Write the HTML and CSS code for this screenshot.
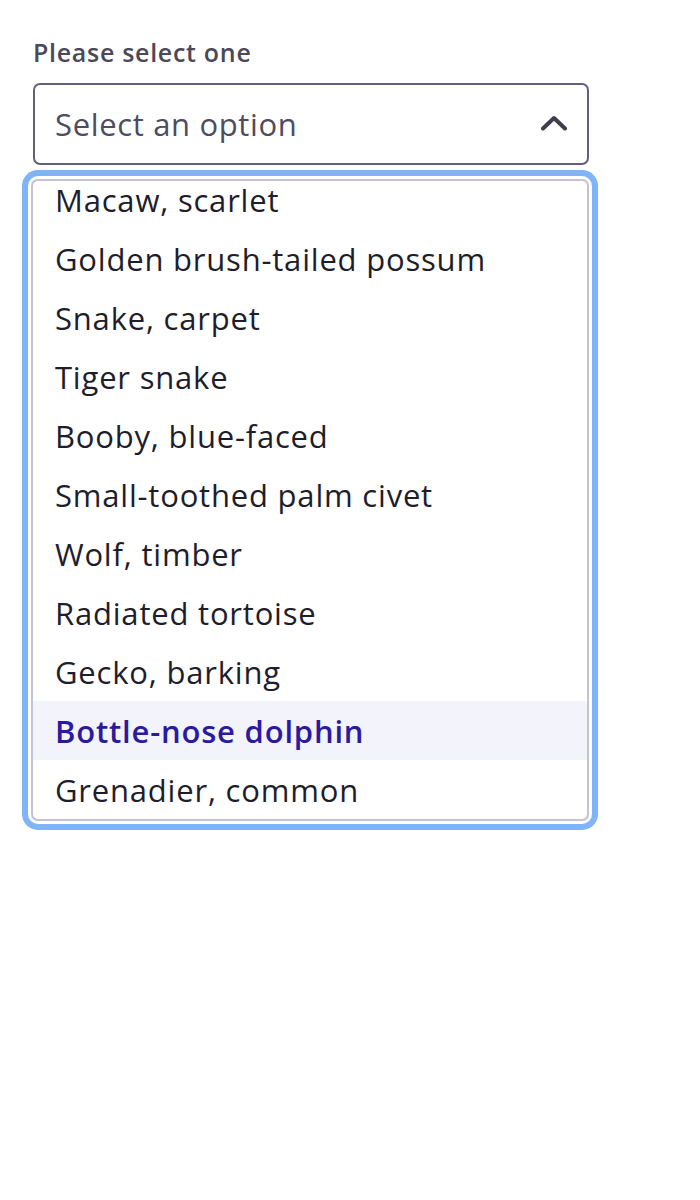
FILE: index.html
```html
<!DOCTYPE html>
<html>
<head>
<meta charset="utf-8">
<link rel="stylesheet" href="styles.css">
</head>
<body>
<div class="field">
  <label class="label">Please select one</label>
  <div class="select">
    <span class="placeholder">Select an option</span>
    <svg class="chevron" width="26" height="16" viewBox="0 0 26 16"><polyline points="2,13.5 13,3 24,13.5" fill="none" stroke="#3f3d50" stroke-width="4" stroke-linecap="round" stroke-linejoin="round"/></svg>
  </div>
  <div class="listbox">
    <ul class="options">
      <li class="option first">Macaw, scarlet</li>
      <li class="option">Golden brush-tailed possum</li>
      <li class="option">Snake, carpet</li>
      <li class="option">Tiger snake</li>
      <li class="option">Booby, blue-faced</li>
      <li class="option">Small-toothed palm civet</li>
      <li class="option">Wolf, timber</li>
      <li class="option">Radiated tortoise</li>
      <li class="option">Gecko, barking</li>
      <li class="option active">Bottle-nose dolphin</li>
      <li class="option">Grenadier, common</li>
    </ul>
  </div>
</div>
</body>
</html>
```
FILE: styles.css
```css
html, body {
  margin: 0;
  padding: 0;
  background: #ffffff;
}
body {
  font-family: "Open Sans", "Noto Sans", sans-serif;
  min-height: 1200px;
}
.field {
  padding: 35px 0 40px 33px;
  width: 556px;
  display: flex;
  flex-direction: column;
}
.label {
  font-size: 25px;
  font-weight: 600;
  letter-spacing: 0.7px;
  color: #4a4859;
  line-height: 34px;
  margin-bottom: 14px;
}
.select {
  box-sizing: border-box;
  height: 82px;
  border: 2px solid #62607a;
  border-radius: 7px;
  display: flex;
  align-items: center;
  justify-content: space-between;
  padding: 0 20px 0 20px;
}
.placeholder {
  font-size: 31px;
  letter-spacing: 0.65px;
  color: #4e4c5f;
  line-height: 40px;
}
.chevron {
  display: block;
  margin-top: -2px;
}
.listbox {
  box-sizing: border-box;
  margin-top: 14px;
  margin-left: -2px;
  width: 558px;
  height: 642px;
  border: 2px solid #c4c2d6;
  border-radius: 7px;
  box-shadow: 0 0 0 3px #ffffff, 0 0 0 9px #80b4f8;
  overflow: hidden;
}
.options {
  list-style: none;
  margin: 0;
  padding: 0;
}
.option {
  height: 59px;
  display: flex;
  align-items: center;
  padding-left: 22px;
  font-size: 31px;
  letter-spacing: 0.8px;
  color: #1e1d2b;
}
.option.first {
  margin-top: -11px;
}
.option.active {
  background: #f3f3fc;
  color: #2b1a9f;
  font-weight: 600;
}
```
